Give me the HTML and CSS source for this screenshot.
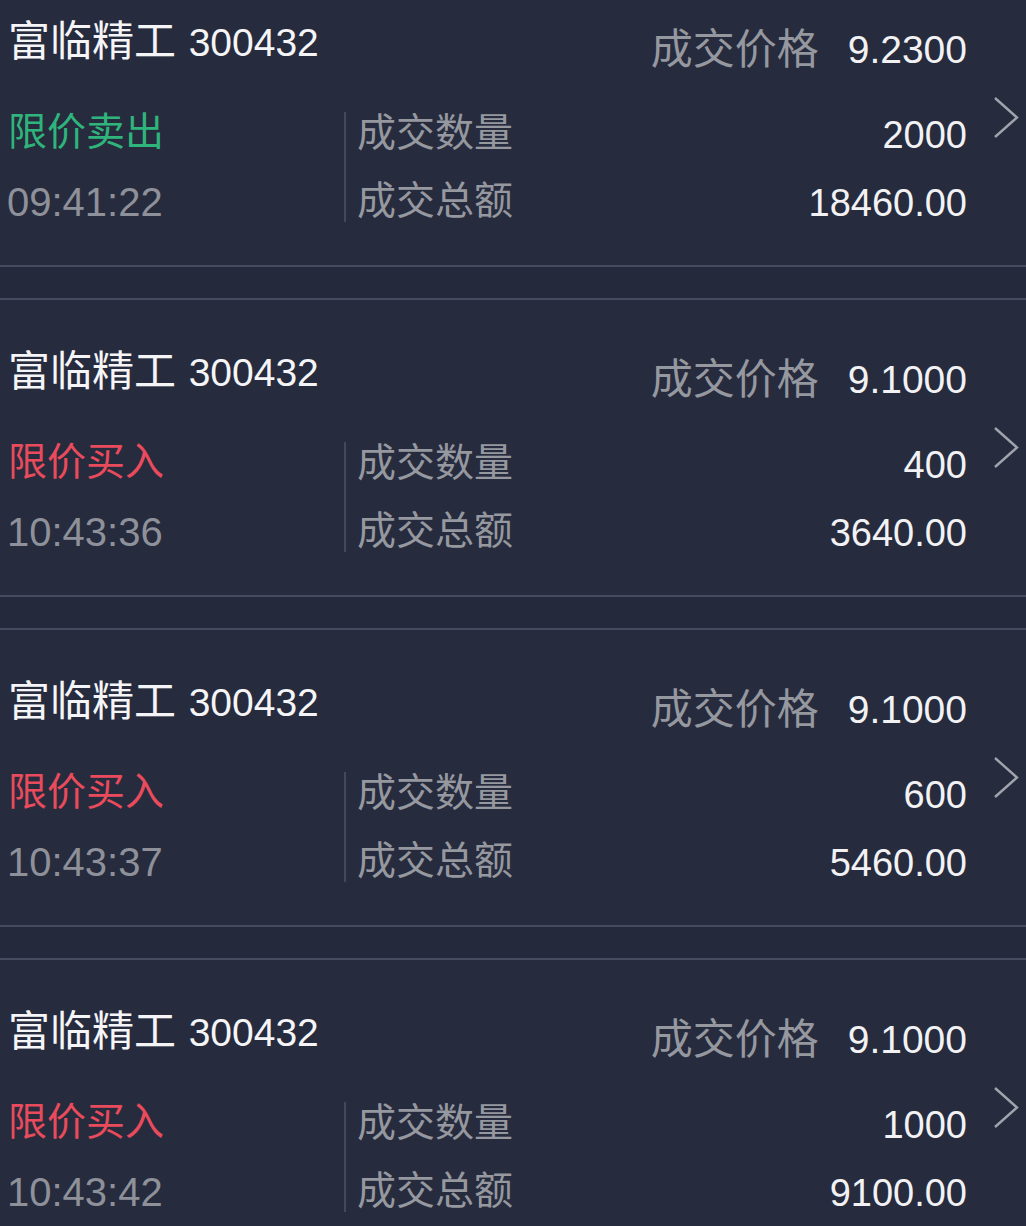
FILE: index.html
```html
<!DOCTYPE html>
<html lang="zh-CN">
<head>
    <meta charset="UTF-8">
    <meta name="viewport" content="width=device-width, initial-scale=1.0">
    <title>成交记录</title>
    <link rel="stylesheet" href="styles.css">
</head>
<body>

    <!-- Deal list -->
    <div class="deal-list">

        <div class="deal">
            <div class="deal-main">
                <div class="deal-head">
                    <div class="stock">富临精工 <span class="code">300432</span></div>
                    <div class="price"><span class="label">成交价格</span><span class="value">9.2300</span></div>
                </div>
                <div class="deal-body">
                    <div class="side">
                        <div class="type sell">限价卖出</div>
                        <div class="time">09:41:22</div>
                    </div>
                    <div class="divider"></div>
                    <div class="figures">
                        <div class="row"><span class="label">成交数量</span><span class="value">2000</span></div>
                        <div class="row"><span class="label">成交总额</span><span class="value">18460.00</span></div>
                    </div>
                </div>
            </div>
            <div class="arrow">
                <svg width="28" height="44" viewBox="0 0 28 44"><path d="M2 2 L24 21.5 L2 41" fill="none" stroke="#a2a4ad" stroke-width="2.4"/></svg>
            </div>
        </div>

        <div class="deal">
            <div class="deal-main">
                <div class="deal-head">
                    <div class="stock">富临精工 <span class="code">300432</span></div>
                    <div class="price"><span class="label">成交价格</span><span class="value">9.1000</span></div>
                </div>
                <div class="deal-body">
                    <div class="side">
                        <div class="type buy">限价买入</div>
                        <div class="time">10:43:36</div>
                    </div>
                    <div class="divider"></div>
                    <div class="figures">
                        <div class="row"><span class="label">成交数量</span><span class="value">400</span></div>
                        <div class="row"><span class="label">成交总额</span><span class="value">3640.00</span></div>
                    </div>
                </div>
            </div>
            <div class="arrow">
                <svg width="28" height="44" viewBox="0 0 28 44"><path d="M2 2 L24 21.5 L2 41" fill="none" stroke="#a2a4ad" stroke-width="2.4"/></svg>
            </div>
        </div>

        <div class="deal">
            <div class="deal-main">
                <div class="deal-head">
                    <div class="stock">富临精工 <span class="code">300432</span></div>
                    <div class="price"><span class="label">成交价格</span><span class="value">9.1000</span></div>
                </div>
                <div class="deal-body">
                    <div class="side">
                        <div class="type buy">限价买入</div>
                        <div class="time">10:43:37</div>
                    </div>
                    <div class="divider"></div>
                    <div class="figures">
                        <div class="row"><span class="label">成交数量</span><span class="value">600</span></div>
                        <div class="row"><span class="label">成交总额</span><span class="value">5460.00</span></div>
                    </div>
                </div>
            </div>
            <div class="arrow">
                <svg width="28" height="44" viewBox="0 0 28 44"><path d="M2 2 L24 21.5 L2 41" fill="none" stroke="#a2a4ad" stroke-width="2.4"/></svg>
            </div>
        </div>

        <div class="deal">
            <div class="deal-main">
                <div class="deal-head">
                    <div class="stock">富临精工 <span class="code">300432</span></div>
                    <div class="price"><span class="label">成交价格</span><span class="value">9.1000</span></div>
                </div>
                <div class="deal-body">
                    <div class="side">
                        <div class="type buy">限价买入</div>
                        <div class="time">10:43:42</div>
                    </div>
                    <div class="divider"></div>
                    <div class="figures">
                        <div class="row"><span class="label">成交数量</span><span class="value">1000</span></div>
                        <div class="row"><span class="label">成交总额</span><span class="value">9100.00</span></div>
                    </div>
                </div>
            </div>
            <div class="arrow">
                <svg width="28" height="44" viewBox="0 0 28 44"><path d="M2 2 L24 21.5 L2 41" fill="none" stroke="#a2a4ad" stroke-width="2.4"/></svg>
            </div>
        </div>

    </div>

</body>
</html>
```

FILE: styles.css
```css
* {
    margin: 0;
    padding: 0;
    box-sizing: border-box;
}

body {
    font-family: "Liberation Sans", "Noto Sans CJK SC", sans-serif;
    background: #24293b;
    color: #f2f2f4;
    overflow: hidden;
}

.deal-list {
    display: flex;
    flex-direction: column;
    gap: 31px;
    margin-top: -32px;
}

.deal {
    display: flex;
    background: #262b3e;
    border-top: 2px solid #464c5f;
    border-bottom: 2px solid #464c5f;
    height: 299px;
}

.deal-main {
    flex: 1;
    padding: 48px 0 31px 7px;
}

.deal-head {
    display: flex;
    justify-content: space-between;
    align-items: flex-start;
}

.stock {
    font-size: 42px;
    line-height: 48px;
    color: #f5f5f7;
    padding-left: 1px;
}

.stock .code {
    font-size: 39px;
    margin-left: 1px;
}

.price {
    display: flex;
    gap: 29px;
    margin-top: 8px;
    line-height: 48px;
}

.price .label {
    font-size: 42px;
    color: #96989f;
}

.price .value {
    font-size: 39px;
    color: #f2f2f4;
}

.deal-body {
    display: flex;
    align-items: center;
    margin-top: 24px;
}

.side {
    width: 337px;
}

.type, .time {
    font-size: 39px;
    line-height: 68px;
}

.type {
    padding-left: 1px;
}

.sell {
    color: #2fb47b;
}

.buy {
    color: #e94b5c;
}

.time {
    color: #8e9199;
    font-size: 40px;
    padding-top: 2px;
}

.divider {
    width: 2px;
    height: 110px;
    background: #434959;
}

.figures {
    flex: 1;
    margin-left: 11px;
}

.row {
    display: flex;
    justify-content: space-between;
    align-items: baseline;
    font-size: 39px;
    line-height: 68px;
}

.row .label {
    color: #96989f;
}

.row .value {
    font-size: 38px;
    color: #f2f2f4;
    position: relative;
    top: 2px;
}

.arrow {
    width: 59px;
    padding: 126px 0 0 26px;
}
```
